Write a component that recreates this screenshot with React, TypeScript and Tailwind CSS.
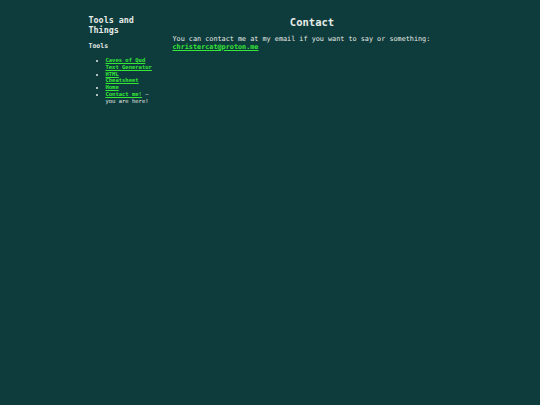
import React from 'react';

const links = [
  { label: 'Caves of Qud Text Generator' },
  { label: 'HTML Cheatsheet' },
  { label: 'Home' },
];

export default function App() {
  return (
    <div className="min-h-screen bg-[#0e3b3b] text-[#e6ece8] font-['DejaVu_Sans_Mono',monospace]">
      <div className="mx-auto flex w-[363px] gap-[19px] pt-[15px]">
        {/* Sidebar */}
        <aside className="w-[65px] shrink-0">
          <h1 className="text-[8.4px] font-bold leading-[10px]">Tools and Things</h1>
          <h2 className="mt-[7px] text-[6.5px] font-bold leading-[8px]">Tools</h2>
          <ul className="mt-[7px] list-disc pl-[17px] text-[5.5px] leading-[6.8px] marker:text-[#e6ece8]">
            {links.map((l) => (
              <li key={l.label}>
                <a href="#" className="font-bold text-[#36e836] underline">
                  {l.label}
                </a>
              </li>
            ))}
            <li>
              <a href="#" className="font-bold text-[#36e836] underline">
                Contact me!
              </a>{' '}
              — you are here!
            </li>
          </ul>
        </aside>

        {/* Main */}
        <main className="flex-1">
          <h1 className="mt-[1px] text-center text-[10.5px] font-bold leading-[12px]">Contact</h1>
          <p className="mt-[8px] text-[6.8px] leading-[7.8px]">
            You can contact me at my email if you want to say or something:{' '}
            <a href="#" className="font-bold text-[#36e836] underline">
              christercat@proton.me
            </a>
          </p>
        </main>
      </div>
    </div>
  );
}
